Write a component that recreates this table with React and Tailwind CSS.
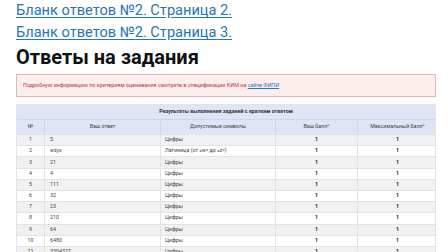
import React from "react";

const rows = [
  ["1", "5", "Цифры"],
  ["2", "wzyx", "Латиница (от «w» до «z»)"],
  ["3", "21", "Цифры"],
  ["4", "4", "Цифры"],
  ["5", "111", "Цифры"],
  ["6", "32", "Цифры"],
  ["7", "23", "Цифры"],
  ["8", "210", "Цифры"],
  ["9", "64", "Цифры"],
  ["10", "6480", "Цифры"],
  ["11", "3304327", "Цифры"],
];

const cols = "grid grid-cols-[27px_116px_115px_82px_80px]";

export default function App() {
  return (
    <div className="w-[448px] h-[252px] overflow-hidden bg-white pl-4 pr-3" style={{ fontFamily: "Roboto, 'Liberation Sans', sans-serif" }}>
      <div className="flex flex-col">
        <a href="#" className="block h-[22px] leading-[20px] text-[14.6px] text-[#2676b5] underline underline-offset-2">Бланк ответов №2. Страница 2.</a>
        <a href="#" className="block h-[22px] leading-[20px] text-[14.6px] text-[#2676b5] underline underline-offset-2">Бланк ответов №2. Страница 3.</a>
        <h1 className="h-[30px] leading-[26px] text-[20px] font-bold text-[#111]">Ответы на задания</h1>
        <div className="h-[23px] w-[420px] border border-[#e2b4b4] bg-[#fdeeee] flex items-center px-[6px] text-[5.45px] text-[#b03a3a]">
          <span>Подробную информацию по критериям оценивания смотрите в спецификации КИМ на <a href="#" className="text-[#2676b5] underline">сайте ФИПИ</a></span>
        </div>
        <div className="mt-[7px] w-[420px] border border-[#e4e4e4] text-[5.3px] text-[#444]">
          <div className="h-[14px] bg-[#dfe4f6] flex items-center justify-center font-bold text-[#333]">Результаты выполнения заданий с кратким ответом</div>
          <div className={`${cols} h-[15px] bg-[#dfe4f6] border-t border-[#d0d6ea]`}>
            <div className="flex items-center justify-center">№</div>
            <div className="flex items-center justify-center border-l border-[#cfd5e8]">Ваш ответ</div>
            <div className="flex items-center justify-center border-l border-[#cfd5e8]">Допустимые символы</div>
            <div className="flex items-center justify-center border-l border-[#cfd5e8]">Ваш балл<span className="text-[#e03030]">*</span></div>
            <div className="flex items-center justify-center border-l border-[#cfd5e8]">Максимальный балл<span className="text-[#e03030]">*</span></div>
          </div>
          {rows.map((r, i) => (
            <div key={r[0]} className={`${cols} h-[11.2px] border-t border-[#e2e2e2] ${i % 2 === 0 ? "bg-[#f1f1f1]" : "bg-white"}`}>
              <div className="flex items-center justify-center">{r[0]}</div>
              <div className="flex items-center pl-[5px] border-l border-[#e2e2e2]">{r[1]}</div>
              <div className="flex items-center pl-[4px] border-l border-[#e2e2e2]">{r[2]}</div>
              <div className="flex items-center justify-center font-bold text-[#222] border-l border-[#e2e2e2]">1</div>
              <div className="flex items-center justify-center font-bold text-[#222] border-l border-[#e2e2e2]">1</div>
            </div>
          ))}
        </div>
      </div>
    </div>
  );
}
